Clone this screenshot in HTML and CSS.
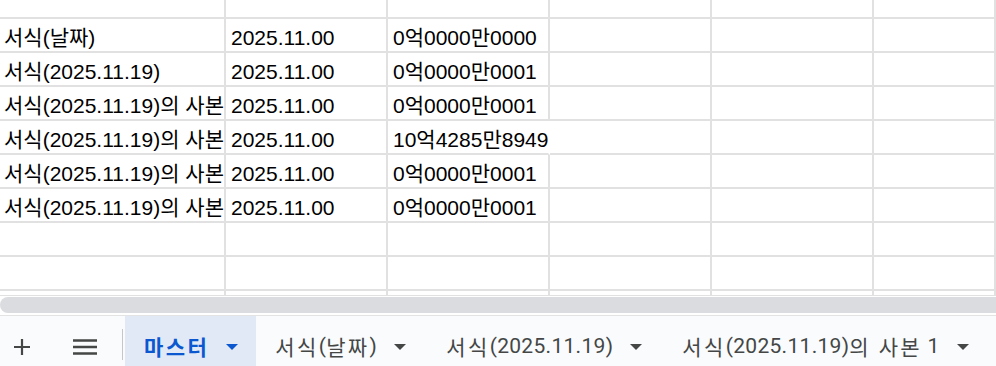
FILE: index.html
```html
<!DOCTYPE html>
<html lang="ko">
<head>
  <meta charset="UTF-8" />
  <meta name="viewport" content="width=device-width, initial-scale=1.0" />
  <title>Sheet - 마스터</title>
  <link rel="stylesheet" href="styles.css">
</head>
<body>
  <main class="sheet">
    <div class="row top">
      <div class="cell a"></div><div class="cell"></div><div class="cell"></div><div class="cell"></div><div class="cell"></div><div class="cell"></div>
    </div>
    <div class="row">
      <div class="cell a">서식(날짜)</div><div class="cell">2025.11.00</div><div class="cell">0억0000만0000</div><div class="cell"></div><div class="cell"></div><div class="cell"></div>
    </div>
    <div class="row">
      <div class="cell a">서식(2025.11.19)</div><div class="cell">2025.11.00</div><div class="cell">0억0000만0001</div><div class="cell"></div><div class="cell"></div><div class="cell"></div>
    </div>
    <div class="row">
      <div class="cell a">서식(2025.11.19)의 사본</div><div class="cell">2025.11.00</div><div class="cell">0억0000만0001</div><div class="cell"></div><div class="cell"></div><div class="cell"></div>
    </div>
    <div class="row">
      <div class="cell a">서식(2025.11.19)의 사본</div><div class="cell">2025.11.00</div><div class="cell spill">10억4285만8949</div><div class="cell"></div><div class="cell"></div><div class="cell"></div>
    </div>
    <div class="row">
      <div class="cell a">서식(2025.11.19)의 사본</div><div class="cell">2025.11.00</div><div class="cell">0억0000만0001</div><div class="cell"></div><div class="cell"></div><div class="cell"></div>
    </div>
    <div class="row">
      <div class="cell a">서식(2025.11.19)의 사본</div><div class="cell">2025.11.00</div><div class="cell">0억0000만0001</div><div class="cell"></div><div class="cell"></div><div class="cell"></div>
    </div>
    <div class="row">
      <div class="cell a"></div><div class="cell"></div><div class="cell"></div><div class="cell"></div><div class="cell"></div><div class="cell"></div>
    </div>
    <div class="row">
      <div class="cell a"></div><div class="cell"></div><div class="cell"></div><div class="cell"></div><div class="cell"></div><div class="cell"></div>
    </div>
    <div class="row stub">
      <div class="cell a"></div><div class="cell"></div><div class="cell"></div><div class="cell"></div><div class="cell"></div><div class="cell"></div>
    </div>
  </main>

  <div class="hscroll">
    <div class="thumb"></div>
  </div>

  <footer class="tabbar">
    <button class="icon-btn add" title="시트 추가">
      <svg width="16" height="16" viewBox="0 0 16 16"><path d="M8 0v16M0 8h16" stroke="#444746" stroke-width="2.2" fill="none"/></svg>
    </button>
    <button class="icon-btn menu" title="모든 시트">
      <svg width="24" height="16" viewBox="0 0 24 16"><path d="M0 1.5h24M0 8h24M0 14.5h24" stroke="#444746" stroke-width="2.4" fill="none"/></svg>
    </button>
    <span class="divider"></span>
    <ul class="tabs">
      <li class="tab active"><span class="ko">마스터</span><span class="caret"></span></li>
      <li class="tab"><span class="ko">서식</span>(<span class="ko">날짜</span>)<span class="caret"></span></li>
      <li class="tab"><span class="ko">서식</span>(2025.11.19)<span class="caret"></span></li>
      <li class="tab"><span class="ko">서식</span>(2025.11.19)<span class="ko">의 사본</span> 1<span class="caret"></span></li>
    </ul>
  </footer>
</body>
</html>
```

FILE: styles.css
```css
body {
  margin: 0;
  width: 996px;
  height: 366px;
  overflow: hidden;
  background: white;
  font-family: "Liberation Sans", "Noto Sans CJK KR", sans-serif;
}

.sheet {
  height: 296px;
  overflow: hidden;
}

.row {
  display: flex;
  height: 34px;
}

.row.top {
  height: 19px;
}

.row.stub {
  height: 6px;
}

.cell {
  flex: none;
  width: 162px;
  box-sizing: border-box;
  border-right: 2px solid #e1e1e1;
  border-bottom: 2px solid #e1e1e1;
  padding: 0 5px 3px 5px;
  display: flex;
  align-items: flex-end;
  font-size: 21px;
  line-height: 21px;
  color: #000;
  white-space: nowrap;
  overflow: hidden;
}

.cell.a {
  width: 226px;
  padding-left: 4px;
  padding-right: 0;
}

.cell:last-child {
  flex: 1;
}

.cell.spill {
  overflow: visible;
  border-right-color: transparent;
  position: relative;
  z-index: 1;
}

.hscroll {
  height: 20px;
  padding-top: 1px;
  border-bottom: 1px solid #e3e3e3;
  box-sizing: border-box;
}

.thumb {
  height: 16px;
  background: #dadce0;
  border-radius: 8px 0 0 8px;
}

.tabbar {
  display: flex;
  align-items: stretch;
  height: 50px;
  background: #f9fbfd;
}

.icon-btn {
  border: none;
  background: none;
  padding: 12px 0 0 0;
  display: flex;
  align-items: center;
  justify-content: center;
  cursor: pointer;
}

.icon-btn.add {
  width: 44px;
}

.icon-btn.menu {
  width: 40px;
  margin-left: 21px;
}

.divider {
  align-self: flex-start;
  width: 1px;
  height: 31px;
  margin: 13px 2px 0 17px;
  background: #c4c7c5;
}

.tabs {
  list-style: none;
  display: flex;
  margin: 0;
  padding: 0;
}

.tab {
  display: flex;
  align-items: center;
  padding: 10px 21px 0 19px;
  font-family: Roboto, "Noto Sans CJK KR", sans-serif;
  font-size: 21px;
  letter-spacing: 0.3px;
  color: #444746;
  white-space: pre;
  cursor: pointer;
}

.tab .ko {
  letter-spacing: 2.4px;
}

.tab.active {
  background: #e1e9f7;
  color: #0b57d0;
  font-weight: 700;
  padding-right: 18px;
}

.caret {
  width: 0;
  height: 0;
  margin-left: 17px;
  margin-top: 2px;
  border-left: 6.5px solid transparent;
  border-right: 6.5px solid transparent;
  border-top: 6.5px solid #444746;
}

.tab.active .caret {
  border-top-color: #0b57d0;
}
```
